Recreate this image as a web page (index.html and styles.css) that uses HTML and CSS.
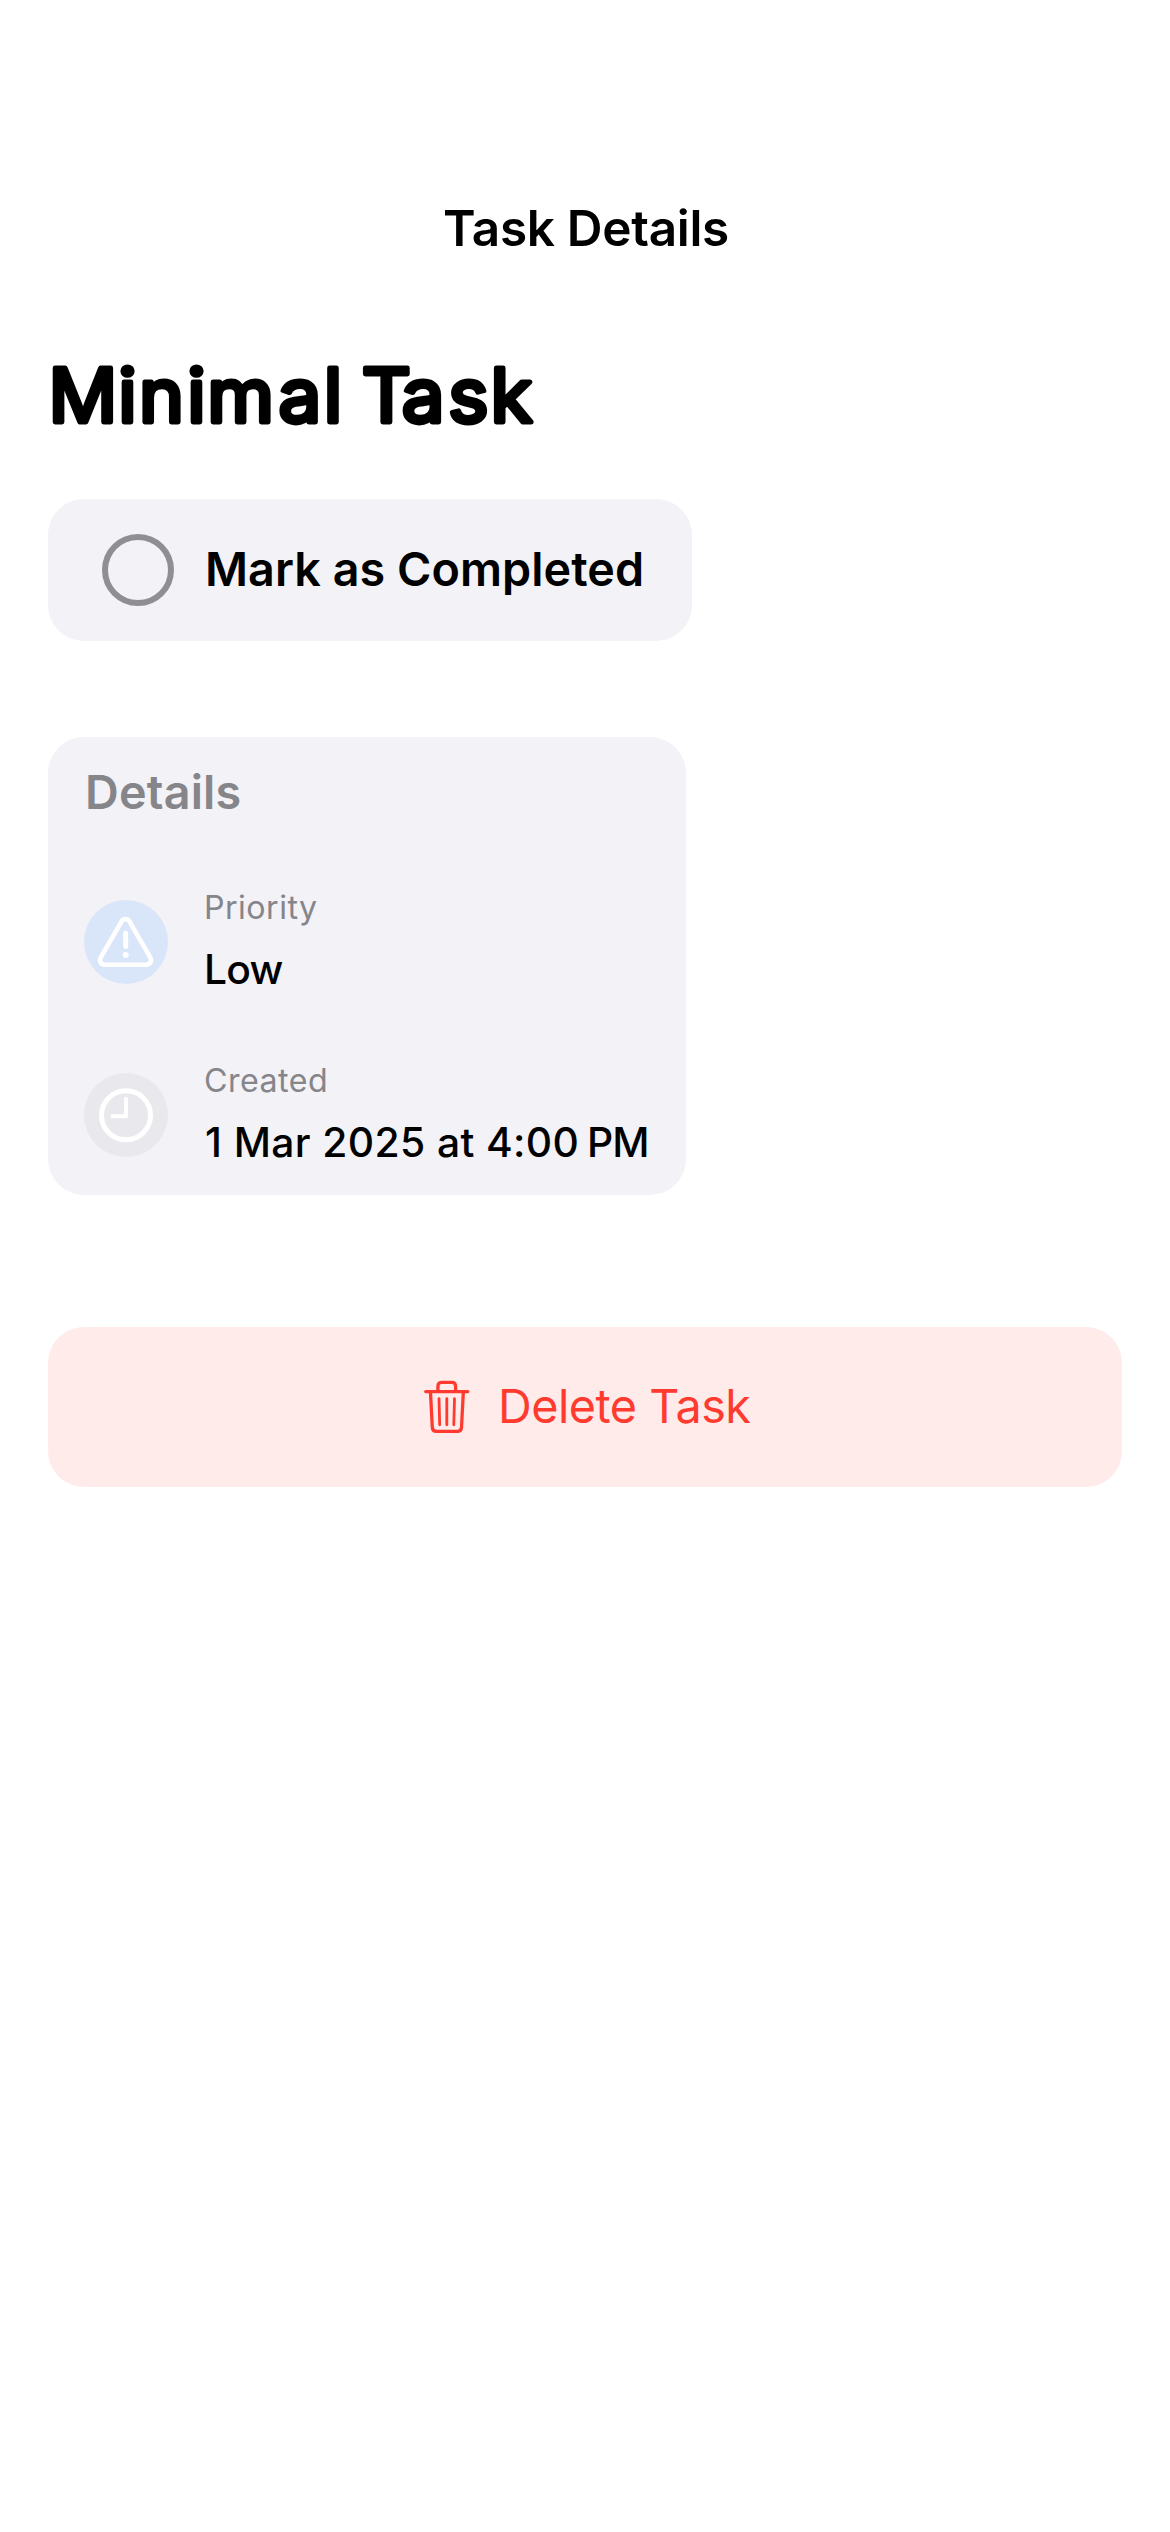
FILE: index.html
```html
<!DOCTYPE html>
<html lang="en">
<head>
<meta charset="utf-8">
<title>Task Details</title>
<link rel="stylesheet" href="styles.css">
</head>
<body>
<header class="nav"><span class="nav-title">Task Details</span></header>
<main class="content">
  <h1 class="heading">
    <svg class="heading-svg" viewBox="0 0 500 80" width="500" height="80">
      <text class="heading-text" transform="scale(1.03 1)" y="70.3" x="0.4 68.2 88.4 135.2 154.5 223.9 267.7 288 304.5 343.4 388.7 429.5">Minimal Task</text>
    </svg>
  </h1>
  <button class="complete">
    <span class="ring"></span>
    <span class="complete-label">Mark as Completed</span>
  </button>
  <section class="card">
    <h2 class="card-title">Details</h2>
    <div class="row">
      <span class="badge badge-blue">
        <svg viewBox="0 0 84 84" width="84" height="84" fill="none" stroke="#fff" stroke-linecap="round" stroke-linejoin="round">
          <path stroke-width="4.6" d="M37.6 21.4 16.9 57.2C14.7 61 16.8 64.7 20.8 64.7H62.2C66.2 64.7 68.3 61 66.1 57.2L45.4 21.4C43.7 18.4 39.3 18.4 37.6 21.4Z"/>
          <path stroke-width="5" d="M41.6 33.2 41.7 46.4"/>
          <circle cx="41.7" cy="55" r="3" fill="#fff" stroke="none"/>
        </svg>
      </span>
      <div class="info">
        <span class="label priority">Priority</span>
        <span class="value low">Low</span>
      </div>
    </div>
    <div class="row">
      <span class="badge badge-gray">
        <svg viewBox="0 0 84 84" width="84" height="84" fill="none" stroke="#fff" stroke-linecap="round" stroke-linejoin="round">
          <circle cx="42" cy="42.3" r="24.5" stroke-width="5"/>
          <path stroke-width="4" d="M42 25.8V43.2H28.4"/>
        </svg>
      </span>
      <div class="info">
        <span class="label created">Created</span>
        <span class="value date">1<span class="day-gap"> </span>Mar 2025 at 4:00<span class="thin-gap"> </span><span class="period">PM</span></span>
      </div>
    </div>
  </section>
  <button class="delete">
    <svg class="trash" viewBox="0 0 46 54" width="46" height="54" fill="none" stroke="#ff3b30" stroke-width="3.3" stroke-linecap="round" stroke-linejoin="round">
      <path d="M1.7 11.6H43.8M13.9 11V6.4C13.9 3.6 15.6 2.3 17.9 2.3H27.9C30.2 2.3 31.6 3.6 31.6 6.4V11"/>
      <path d="M6.5 12.5 8.3 47.5C8.5 50.1 9.8 51.4 12.3 51.4H33.5C36 51.4 37.3 50.1 37.5 47.5L39.3 12.5"/>
      <path stroke-width="2.8" d="M15 18.6 15.7 44.8M22.8 18.6V44.8M30.5 18.6 29.8 44.8"/>
    </svg>
    <span class="delete-label">Delete Task</span>
  </button>
</main>
</body>
</html>
```
FILE: styles.css
```css
* { box-sizing: border-box; }
body {
  margin: 0;
  min-height: 2532px;
  background: #fff;
  color: #000;
  font-family: Inter, "Liberation Sans", sans-serif;
}
h1, h2 { margin: 0; }
button { border: 0; font-family: inherit; color: inherit; }
.nav { padding: 198px 0 0 2px; text-align: center; height: 352px; }
.nav-title { display: block; font-size: 49.5px; line-height: 60px; font-weight: 600; letter-spacing: -0.3px; }
.content { display: flex; flex-direction: column; align-items: flex-start; padding: 0 48px; }
.heading { height: 147px; }
.heading-svg { display: block; overflow: visible; }
.heading-text {
  font-size: 74px;
  font-weight: 400;
  fill: #000;
  stroke: #000;
  stroke-width: 4.8px;
  stroke-linejoin: round;
  stroke-linecap: round;
}
.complete {
  display: flex;
  align-items: center;
  gap: 31px;
  width: 644px;
  height: 142px;
  padding: 0 0 0 54px;
  border-radius: 36px;
  background: #f2f2f7;
}
.ring { width: 72px; height: 72px; border: 6px solid #8e8e93; border-radius: 50%; }
.complete-label { margin-bottom: 2px; font-size: 46.7px; line-height: 56px; font-weight: 600; letter-spacing: 0.05px; white-space: nowrap; }
.card {
  width: 638px;
  height: 458px;
  margin-top: 96px;
  padding: 27px 36px 0;
  border-radius: 36px;
  background: #f2f2f7;
}
.card-title { padding-left: 1px; font-size: 46.7px; line-height: 56px; font-weight: 600; color: #85858a; letter-spacing: 0.2px; margin-bottom: 63px; }
.row { display: flex; align-items: center; gap: 36px; height: 118px; margin-bottom: 55px; }
.badge { width: 84px; height: 84px; border-radius: 50%; flex: none; }
.badge svg { display: block; }
.badge-blue { background: #d9e6f9; }
.badge-gray { background: #e8e8ed; }
.info { display: flex; flex-direction: column; gap: 16px; margin-bottom: 3px; white-space: nowrap; }
.label { font-size: 32.2px; line-height: 40px; color: #85858a; letter-spacing: 0.45px; }
.value { font-size: 40.8px; line-height: 50px; font-weight: 500; }
.low { letter-spacing: -0.8px; }
.date { padding-left: 1px; letter-spacing: 0.38px; }
.day-gap { letter-spacing: 0.5px; }
.thin-gap { letter-spacing: -3.2px; }
.period { letter-spacing: -1px; }
.delete {
  display: flex;
  align-items: center;
  width: 1074px;
  height: 160px;
  margin-top: 132px;
  padding: 0 0 0 376px;
  gap: 28px;
  border-radius: 36px;
  background: #ffebea;
  color: #ff3b30;
}
.delete-label { margin-bottom: 2px; font-size: 46.7px; line-height: 56px; font-weight: 400; letter-spacing: -0.49px; white-space: nowrap; }
```
